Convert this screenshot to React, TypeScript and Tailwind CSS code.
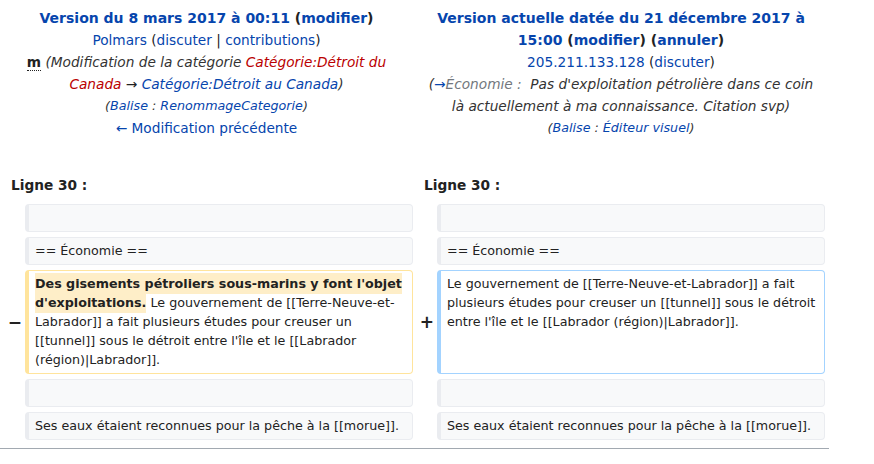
import React from 'react';

const link = 'text-[#0645ad]';
const red = 'text-[#ba0000]';

type Kind = 'context' | 'deleted' | 'added';

function Box({ kind, children }: { kind: Kind; children?: React.ReactNode }) {
  const tone =
    kind === 'deleted'
      ? 'border-[#ffe49c] bg-white'
      : kind === 'added'
        ? 'border-[#a3d3ff] bg-white'
        : 'border-[#eaecf0] bg-[#f8f9fa]';
  return (
    <div className={`rounded-[4px] border border-l-4 pl-[6px] pr-[6px] pt-[3px] pb-[4px] min-h-[28px] ${tone}`}>
      {children}
    </div>
  );
}

function Marker({ sign }: { sign?: string }) {
  return (
    <div className="flex items-center justify-end pr-[3px] font-bold text-[17px] leading-none">
      {sign}
    </div>
  );
}

export default function App() {
  const rows: { left: React.ReactNode; right: React.ReactNode; kind?: 'change' }[] = [
    { left: null, right: null },
    { left: '== Économie ==', right: '== Économie ==' },
    {
      kind: 'change',
      left: (
        <>
          <span className="bg-[#feeec8] font-bold py-[3px]">
            Des gisements pétroliers sous-marins y font l'objet d'exploitations.
          </span>{' '}
          Le gouvernement de [[Terre-Neuve-et-Labrador]] a fait plusieurs études pour creuser un
          [[tunnel]] sous le détroit entre l'île et le [[Labrador (région)|Labrador]].
        </>
      ),
      right:
        "Le gouvernement de [[Terre-Neuve-et-Labrador]] a fait plusieurs études pour creuser un [[tunnel]] sous le détroit entre l'île et le [[Labrador (région)|Labrador]].",
    },
    { left: null, right: null },
    {
      left: 'Ses eaux étaient reconnues pour la pêche à la [[morue]].',
      right: 'Ses eaux étaient reconnues pour la pêche à la [[morue]].',
    },
  ];

  return (
    <div className="w-[874px] h-[464px] overflow-hidden bg-white font-['DejaVu_Sans',sans-serif] text-[#222222]">
      <div className="w-[829px]">
        {/* revision headers */}
        <div className="grid grid-cols-[413px_416px] pt-[7px] text-center text-[13.7px] leading-[22px]">
          <div className="px-[8px]">
            <div className="font-bold text-[14px]">
              <span className={link}>Version du 8 mars 2017 à 00:11</span> (
              <span className={link}>modifier</span>)
            </div>
            <div>
              <span className={link}>Polmars</span> (<span className={link}>discuter</span> |{' '}
              <span className={link}>contributions</span>)
            </div>
            <div>
              <abbr className="font-bold no-underline border-b border-dotted border-[#222222]">m</abbr>{' '}
              <span className="italic text-[#333333]">
                (Modification de la catégorie{' '}
                <span className={red}>Catégorie:Détroit du Canada</span>{' '}
                <span className="text-[#222222]">→</span>{' '}
                <span className={link}>Catégorie:Détroit au Canada</span>)
              </span>
            </div>
            <div className="italic text-[12.7px] text-[#333333]">
              (<span className={link}>Balise</span> : <span className={link}>RenommageCategorie</span>)
            </div>
            <div className={link}>← Modification précédente</div>
          </div>
          <div className="px-[11px]">
            <div className="font-bold text-[14px]">
              <span className={link}>Version actuelle datée du 21 décembre 2017 à 15:00</span> (
              <span className={link}>modifier</span>) (<span className={link}>annuler</span>)
            </div>
            <div>
              <span className={link}>205.211.133.128</span> (<span className={link}>discuter</span>)
            </div>
            <div className="italic text-[#333333]">
              (<span className={link}>→</span>
              <span className="text-[#72777d]">Économie :</span>
              {'\u00a0 '}Pas d'exploitation pétrolière dans ce coin là actuellement à ma connaissance.
              Citation svp)
            </div>
            <div className="italic text-[12.7px] text-[#333333]">
              (<span className={link}>Balise</span> : <span className={link}>Éditeur visuel</span>)
            </div>
          </div>
        </div>

        {/* line numbers */}
        <div className="grid grid-cols-[413px_416px] mt-[35px] font-bold text-[13.7px] leading-[22px]">
          <div className="pl-[11px]">Ligne 30 :</div>
          <div className="pl-[11px]">Ligne 30 :</div>
        </div>

        {/* diff rows */}
        <div className="grid grid-cols-[25px_388px_24px_388px] gap-y-[5px] mt-[8px] text-[12.7px] leading-[19px]">
          {rows.map((r, i) => (
            <React.Fragment key={i}>
              <Marker sign={r.kind === 'change' ? '−' : undefined} />
              <Box kind={r.kind === 'change' ? 'deleted' : 'context'}>{r.left}</Box>
              <Marker sign={r.kind === 'change' ? '+' : undefined} />
              <Box kind={r.kind === 'change' ? 'added' : 'context'}>{r.right}</Box>
            </React.Fragment>
          ))}
        </div>

        <div className="mt-[8px] border-t border-[#a2a9b1]" />
      </div>
    </div>
  );
}
